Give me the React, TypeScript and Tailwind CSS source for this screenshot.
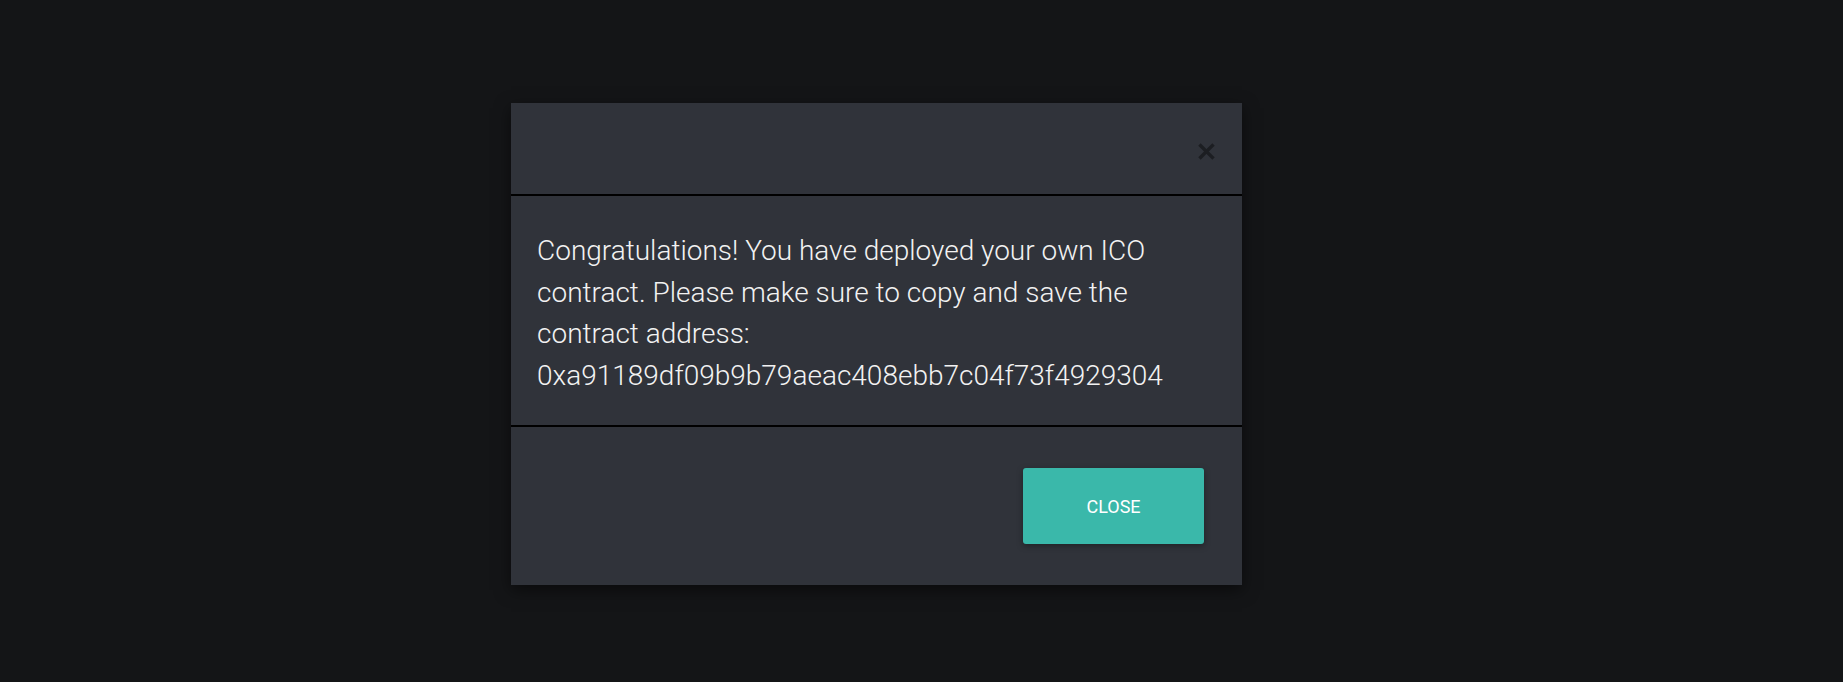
export default function App() {
  return (
    <div className="min-h-[682px] w-full bg-[#141517] pt-[103px] pl-[511px]" style={{ fontFamily: 'Roboto, "Liberation Sans", sans-serif' }}>
      <div className="w-[731px] bg-[#30333a] shadow-[0_5px_15px_rgba(0,0,0,0.5)]">
        {/* header */}
        <div className="flex h-[93px] items-center justify-end border-b-2 border-black pt-[5px] pr-[27px]">
          <button className="flex h-[18px] w-[18px] items-center justify-center">
            <svg width="17" height="17" viewBox="0 0 16 16">
              <path d="M2.5 2.5 L13.5 13.5 M13.5 2.5 L2.5 13.5" stroke="#1c1e22" strokeWidth="3.2" strokeLinecap="square" />
            </svg>
          </button>
        </div>

        {/* body */}
        <div className="border-b-2 border-black px-[26px] pt-[34px] pb-[29px]">
          <p className="text-[28px] font-light leading-[41.5px] text-[#f2f2f2]">
            Congratulations! You have deployed your own ICO contract. Please make sure to copy and save the contract address: 0xa91189df09b9b79aeac408ebb7c04f73f4929304
          </p>
        </div>

        {/* footer */}
        <div className="flex justify-end pt-[41px] pb-[41px] pr-[38px]">
          <button className="h-[76px] w-[181px] rounded-[3px] bg-[#3ab8aa] text-[18px] uppercase text-white shadow-[0_2px_6px_rgba(0,0,0,0.35)]">
            Close
          </button>
        </div>
      </div>
    </div>
  );
}
